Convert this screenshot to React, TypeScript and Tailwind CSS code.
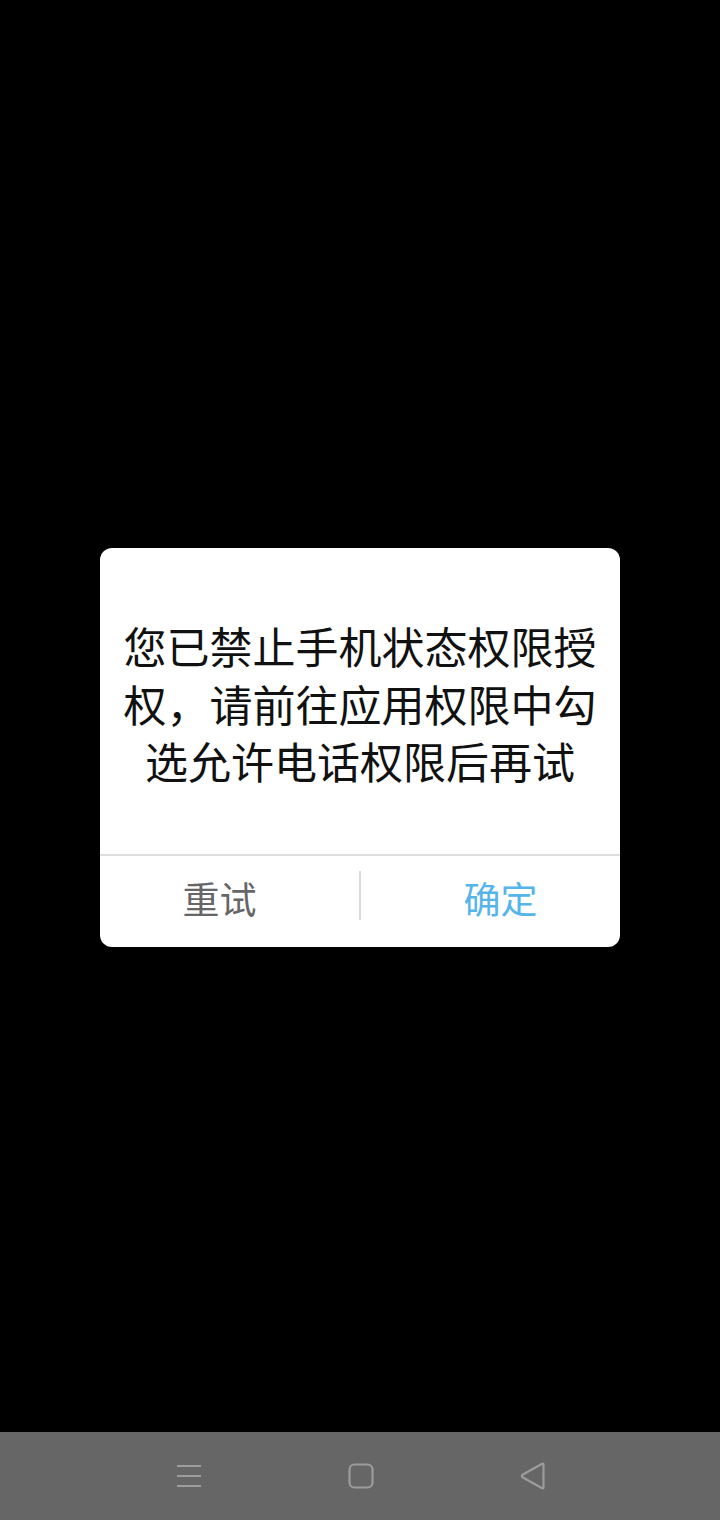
import React from "react";

const font = { fontFamily: '"Noto Sans CJK SC", "Noto Sans", sans-serif' };

const NavBar: React.FC = () => (
  <div className="h-[88px] bg-[#666666] flex items-center">
    <div className="w-full flex items-center justify-center gap-[146px] pl-[2px]">
      <svg width="26" height="26" viewBox="0 0 26 26" fill="none" stroke="#9c9c9c" strokeWidth="2">
        <path d="M1 3h24M1 13h24M1 23h24" />
      </svg>
      <svg width="26" height="26" viewBox="0 0 26 26" fill="none" stroke="#9c9c9c" strokeWidth="2.2">
        <rect x="1.5" y="1.5" width="23" height="23" rx="5" />
      </svg>
      <svg width="26" height="28" viewBox="0 0 26 28" fill="none" stroke="#9c9c9c" strokeWidth="2.2" strokeLinejoin="round">
        <path d="M23.5 2.5c0-.8-.6-1.2-1.3-.8L2.5 12.8c-.9.5-.9 1.9 0 2.4l19.7 11.1c.7.4 1.3 0 1.3-.8z" />
      </svg>
    </div>
  </div>
);

const App: React.FC = () => {
  return (
    <div className="w-[720px] h-[1520px] flex flex-col bg-black" style={font}>
      <div className="flex-1 pt-[548px]">
        <div className="mx-auto w-[520px] bg-white rounded-[12px] overflow-hidden">
          <div className="pt-[69px] pb-[64px] px-[18px] text-center text-[43px] leading-[57.5px] text-[#111111]">
            您已禁止手机状态权限授权，请前往应用权限中勾选允许电话权限后再试
          </div>
          <div className="border-t-2 border-[#dedede] flex h-[93px] items-center pb-[4px]">
            <div className="flex-1 pr-[20px] text-center text-[37px] text-[#666666]">重试</div>
            <div className="w-[2px] h-[49px] bg-[#dcdcdc] self-start mt-[15px]" />
            <div className="flex-1 pl-[20px] text-center text-[37px] text-[#55b5ea]">确定</div>
          </div>
        </div>
      </div>
      <NavBar />
    </div>
  );
};

export default App;
